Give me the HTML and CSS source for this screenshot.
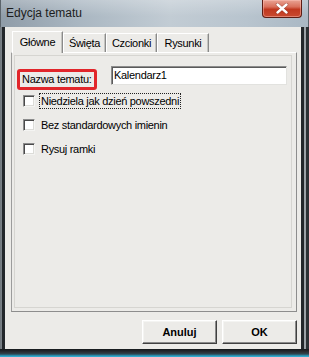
FILE: index.html
```html
<!DOCTYPE html>
<html lang="pl">
<head>
<meta charset="utf-8">
<title>Edycja tematu</title>
<link rel="stylesheet" href="styles.css">
</head>
<body>
<div class="window">
  <div class="titlebar">
    <span class="title">Edycja tematu</span>
    <div class="close">
      <svg width="14" height="11" viewBox="0 0 14 11"><path d="M2.5 1.5 L11.5 9.5 M11.5 1.5 L2.5 9.5" stroke="#6a1a10" stroke-width="3.4" stroke-linecap="round" opacity="0.5"/><path d="M2.5 1.5 L11.5 9.5 M11.5 1.5 L2.5 9.5" stroke="#fff" stroke-width="2.4" stroke-linecap="round"/></svg>
    </div>
  </div>
  <div class="frame">
    <div class="client">
      <div class="tabs">
        <div class="tab active tab-w51">Główne</div>
        <div class="tab tab-w43">Święta</div>
        <div class="tab tab-w51">Czcionki</div>
        <div class="tab tab-w52">Rysunki</div>
      </div>
      <div class="panel">
        <div class="inner">
          <div class="name-row">
            <div class="name-label">Nazwa tematu:</div>
            <div class="textbox">Kalendarz1</div>
          </div>
          <div class="check-row row-first">
            <span class="checkbox"></span>
            <span class="check-label focused">Niedziela jak dzień powszedni</span>
          </div>
          <div class="check-row">
            <span class="checkbox"></span>
            <span class="check-label">Bez standardowych imienin</span>
          </div>
          <div class="check-row">
            <span class="checkbox"></span>
            <span class="check-label">Rysuj ramki</span>
          </div>
        </div>
      </div>
      <div class="buttons">
        <button class="btn">Anuluj</button>
        <button class="btn">OK</button>
      </div>
    </div>
  </div>
  <div class="bottom-edge"></div>
</div>
</body>
</html>
```
FILE: styles.css
```css
* { box-sizing: border-box; }
html, body { margin: 0; padding: 0; background: #fff; }
body {
  font-family: "Liberation Sans", Arial, sans-serif;
  font-size: 11px;
  letter-spacing: -0.3px;
  color: #000;
}
.window {
  width: 309px;
  height: 357px;
  display: flex;
  flex-direction: column;
  background: #2a2f33;
  overflow: hidden;
}
.titlebar {
  height: 27px;
  flex: none;
  display: flex;
  align-items: flex-start;
  padding-left: 6px;
  background:
    linear-gradient(to bottom, rgba(255,255,255,0.25), rgba(255,255,255,0) 60%),
    linear-gradient(to right, #8f9ca8 0, #a9b6c1 25%, #c2ccd4 55%, #b8c4ce 80%, #aab8c4 100%);
  box-shadow: inset 1px 0 #5c646b, inset -1px 0 #5c646b;
}
.title {
  font-family: "Liberation Sans", Arial, sans-serif;
  font-size: 12px;
  letter-spacing: 0;
  color: #1c1c1c;
  margin-top: 6px;
  flex: 1;
}
.close {
  width: 40px;
  height: 18px;
  margin-right: 7px;
  border: 1px solid #5d1d14;
  border-top: none;
  border-radius: 0 0 4px 4px;
  background: linear-gradient(to bottom, #e9a394 0, #d9705c 40%, #c0381f 55%, #c94a30 100%);
  box-shadow: inset 0 0 0 1px rgba(255,200,190,0.45);
  display: flex;
  align-items: center;
  justify-content: center;
}
.frame {
  flex: 1;
  display: flex;
  padding: 0 8px 0 5px;
  background: linear-gradient(to right, #6f767c 0, #7d848a 2px, #23272b 2px, #23272b 5px, #3a3f44 5px, #3a3f44 301px, #23272b 301px, #23272b 304px, #9ca2a7 304px, #9ca2a7 306px, #2c3135 306px);
}
.client {
  flex: 1;
  background: #ecebe8;
  display: flex;
  flex-direction: column;
  padding: 4px 4px 5px 0;
}
.tabs {
  display: flex;
  align-items: flex-end;
  height: 21px;
  padding-left: 7px;
  position: relative;
  z-index: 1;
}
.tab {
  height: 19px;
  line-height: 18px;
  text-align: center;
  border: 1px solid;
  border-color: #ffffff #8a8a8a transparent #ffffff;
  border-bottom: none;
  box-shadow: inset -1px 0 #c4c4c0;
  white-space: nowrap;
}
.tab.active {
  height: 22px;
  line-height: 20px;
  margin-bottom: -1px;
  background: #ecebe8;
  padding-bottom: 2px;
}
.tab-w51 { width: 51px; }
.tab-w43 { width: 43px; }
.tab-w52 { width: 52px; }
.panel {
  height: 260px;
  margin-left: 6px;
  border: 1px solid;
  border-color: #ffffff #8d8d8d #8d8d8d #9c9c9c;
  padding: 2px 4px 3px 2px;
  display: flex;
}
.inner {
  flex: 1;
  border: 1px solid #d6d5d1;
  display: flex;
  flex-direction: column;
}
.name-row {
  display: flex;
  align-items: flex-start;
  margin-top: 10px;
  padding-left: 2px;
  padding-right: 4px;
}
.name-label {
  width: 80px;
  height: 21px;
  margin-top: 3px;
  border: 3px solid #e1262b;
  border-radius: 3px;
  padding-left: 2px;
  line-height: 15px;
  white-space: nowrap;
}
.textbox {
  flex: 1;
  margin-left: 14px;
  height: 19px;
  background: #fff;
  border: 1px solid;
  border-color: #8c8c8c #e2e2df #e2e2df #8c8c8c;
  box-shadow: inset 1px 1px #5a5a5a;
  padding-left: 2px;
  line-height: 16px;
}
.check-row {
  display: flex;
  align-items: center;
  height: 16px;
  margin-top: 8px;
  padding-left: 8px;
}
.check-row.row-first { margin-top: 3px; }
.checkbox {
  width: 12px;
  height: 12px;
  background: #fff;
  border: 1px solid;
  border-color: #8c8c8c #f4f4f2 #f4f4f2 #8c8c8c;
  box-shadow: inset 1px 1px #4a4a4a, inset -1px -1px #dcdcd8;
  flex: none;
}
.check-label {
  margin-left: 4px;
  height: 16px;
  line-height: 14px;
  padding: 0 1px 0 1px;
  border: 1px solid transparent;
  white-space: nowrap;
}
.check-label.focused { border: 1px dotted #222; }
.buttons {
  display: flex;
  justify-content: flex-end;
  gap: 5px;
  margin-top: 8px;
}
.btn {
  width: 75px;
  height: 24px;
  font-family: "Liberation Sans", Arial, sans-serif;
  font-size: 11px;
  font-weight: bold;
  letter-spacing: 0;
  color: #000;
  background: #ecebe8;
  border: 1px solid;
  border-color: #ffffff #404040 #404040 #ffffff;
  box-shadow: inset -1px -1px #8a8a8a, inset 1px 1px #f4f4f2;
  padding: 0;
}
.bottom-edge {
  height: 8px;
  flex: none;
  background: linear-gradient(to bottom, #15191c 0, #2b3034 3px, #2f4650 5px, #2aa3c6 7px, #3db2d4 8px);
}
```
